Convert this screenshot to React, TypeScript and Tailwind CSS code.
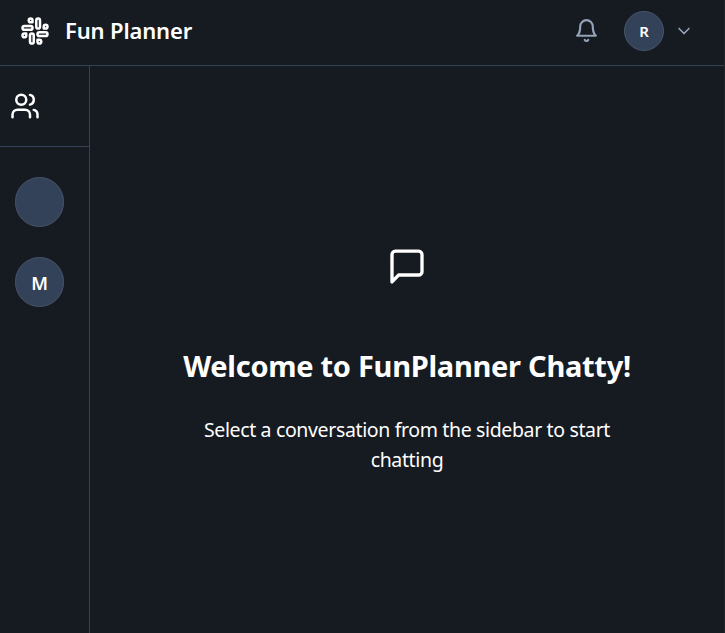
import React from "react";
import { Slack, ChevronDown } from "lucide-react";

const stroke = {
  viewBox: "0 0 24 24",
  fill: "none",
  stroke: "currentColor",
  strokeWidth: 2,
  strokeLinecap: "round",
  strokeLinejoin: "round",
} as const;

function Header() {
  return (
    <header className="flex h-[66px] shrink-0 items-center justify-between border-b border-[#334257] pb-1 pl-5 pr-[30px]">
      <div className="flex items-center gap-[15px]">
        <Slack size={30} />
        <h1 className="-mt-0.5 whitespace-nowrap text-[22px] font-semibold leading-[30px] tracking-[-0.15px]">Fun Planner</h1>
      </div>
      <div className="flex items-center">
        <svg {...stroke} width="25" height="25" className="mr-[25px] text-[#94a3b8]">
          <path d="M6 8a6 6 0 0 1 12 0c0 7 3 9 3 9H3s3-2 3-9" />
          <path d="M10.3 21a1.94 1.94 0 0 0 3.4 0" />
        </svg>
        <div className="mr-2.5 flex size-10 items-center justify-center rounded-full border border-[#475569] bg-[#334259] pt-px text-[15px] font-semibold">R</div>
        <ChevronDown size={20} className="text-[#94a3b8]" />
      </div>
    </header>
  );
}

function Contact({ initial }: { initial: string }) {
  return (
    <div className="flex h-[50px] w-[49px] items-center justify-center rounded-full border border-[#475569] bg-[#334259] pt-0.5 text-[18px] font-semibold">
      {initial}
    </div>
  );
}

function Sidebar() {
  return (
    <aside className="flex w-[90px] shrink-0 flex-col border-r border-[#334257]">
      <div className="h-[81px] border-b border-[#334257] pl-2.5 pt-[25px]">
        <svg {...stroke} width="30" height="30">
          <path d="M16 21v-2a4 4 0 0 0-4-4H6a4 4 0 0 0-4 4v2" />
          <circle cx="9" cy="7" r="4" />
          <path d="M22 21v-2a4 4 0 0 0-3-3.87" />
          <path d="M16 3.13a4 4 0 0 1 0 7.75" />
        </svg>
      </div>
      <div className="flex flex-col gap-[30px] pl-[15px] pt-[30px]">
        <Contact initial="" />
        <Contact initial="M" />
      </div>
    </aside>
  );
}

function Welcome() {
  return (
    <main className="flex flex-1 flex-col items-center pt-[180px] text-center">
      <svg {...stroke} width="40" height="41" preserveAspectRatio="none">
        <path d="M21 15a2 2 0 0 1-2 2H7l-4 4V5a2 2 0 0 1 2-2h14a2 2 0 0 1 2 2z" />
      </svg>
      <h2 className="mt-[59px] whitespace-nowrap text-[29px] font-bold leading-[40px] tracking-[-0.28px]">Welcome to FunPlanner Chatty!</h2>
      <p className="mt-[29px] whitespace-nowrap text-[19.5px] leading-[30px] tracking-[-0.36px]">
        Select a conversation from the sidebar to start
        <br />
        chatting
      </p>
    </main>
  );
}

export default function App() {
  return (
    <div className="w-[725px] bg-[#20242b] pr-px">
      <div className="flex h-[633px] w-full flex-col overflow-hidden bg-[#161b22] font-['Noto_Sans','Open_Sans',sans-serif] text-white">
        <Header />
        <div className="flex min-h-0 flex-1">
          <Sidebar />
          <Welcome />
        </div>
      </div>
    </div>
  );
}
